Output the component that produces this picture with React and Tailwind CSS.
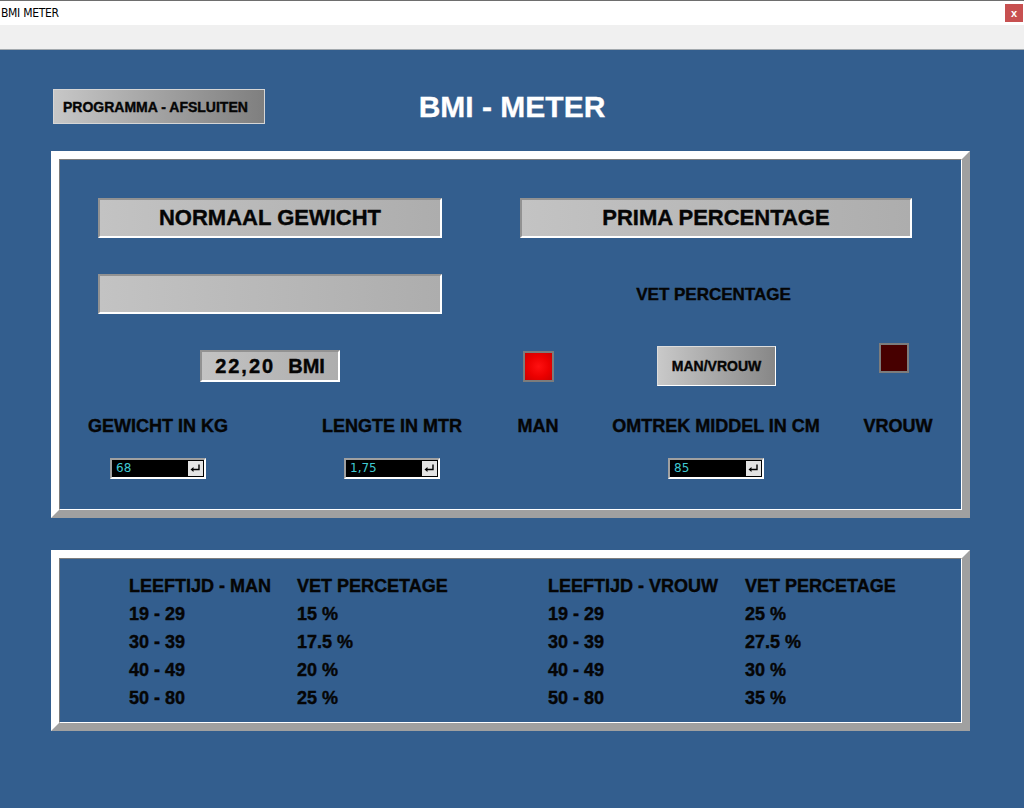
import React from "react";

const ink = "text-[#050505] [-webkit-text-stroke:0.4px_#050505]";

function EnterGlyph() {
  return (
    <svg width="13" height="13" viewBox="0 0 13 13" aria-hidden="true">
      <path d="M10 2.5 V7.5 H3.5" fill="none" stroke="#000" strokeWidth="1.4" />
      <path d="M1.5 7.5 L4.5 5 V10 Z" fill="#000" />
    </svg>
  );
}

function NumField({ value }) {
  return (
    <div className="w-[96px] h-[21px] flex border-2 border-t-[#a0a0a0] border-l-[#a0a0a0] border-r-white border-b-white [-webkit-text-stroke:0px]">
      <div className="flex-1 bg-black text-[#3fc9d2] text-[12px] font-normal leading-[17px] pl-[4px] font-['DejaVu_Sans',sans-serif]">
        {value}
      </div>
      <div className="w-[17px] h-[17px] bg-[#e4e4e4] border border-black flex items-center justify-center">
        <EnterGlyph />
      </div>
    </div>
  );
}

function InsetBox({ className = "", children }) {
  return (
    <div
      className={`bg-linear-to-r from-[#c3c3c3] to-[#adadad] border-2 border-t-[#929292] border-l-[#929292] border-r-white border-b-white flex items-center justify-center ${className}`}
    >
      {children}
    </div>
  );
}

const manRows = [
  ["19 - 29", "15 %"],
  ["30 - 39", "17.5 %"],
  ["40 - 49", "20 %"],
  ["50 - 80", "25 %"],
];
const vrouwRows = [
  ["19 - 29", "25 %"],
  ["30 - 39", "27.5 %"],
  ["40 - 49", "30 %"],
  ["50 - 80", "35 %"],
];

export default function App() {
  return (
    <div className="w-[1024px] h-[808px] flex flex-col overflow-hidden font-['Liberation_Sans',Arial,sans-serif]">
      {/* window chrome */}
      <div className="h-px bg-[#6e6e6e]" />
      <div className="h-[24px] bg-white flex items-center justify-between pl-[1px] pr-[1px]">
        <span className="text-[12px] leading-none text-black font-['DejaVu_Sans_Condensed','Liberation_Sans_Narrow',sans-serif] tracking-[-0.3px]">
          BMI METER
        </span>
        <div className="w-[18px] h-[18px] bg-[#c75050] flex items-center justify-center text-white text-[11px] font-bold leading-none">
          x
        </div>
      </div>
      <div className="h-[24px] bg-[#f0f0f0]" />
      <div className="h-px bg-[#a3a9ae]" />

      <main className="flex-1 bg-[#335e8e] flex flex-col pt-[39px]">
        {/* header */}
        <div className="grid grid-cols-[1fr_auto_1fr] items-center h-[35px]">
          <div className="pl-[53px]">
            <button className={`w-[212px] h-[35px] pl-[9px] text-left bg-linear-to-r from-[#c7c7c7] to-[#7f7f7f] border border-[#d6d6d6] text-[14px] font-bold leading-none ${ink}`}>
              PROGRAMMA - AFSLUITEN
            </button>
          </div>
          <h1 className="text-white text-[30px] font-bold leading-none [-webkit-text-stroke:0.3px_#fff]">BMI - METER</h1>
          <div />
        </div>

        {/* measurement panel */}
        <section className="ml-[51px] mt-[27px] w-[919px] h-[367px] border-8 border-t-white border-l-white border-r-[#a0a0a0] border-b-[#a0a0a0]">
          <div className={`h-full border border-t-[#7d7d7d] border-l-[#7d7d7d] border-r-white border-b-white flex flex-col pt-[38px] ${ink}`}>
            <div className="flex">
              <InsetBox className="ml-[38px] w-[344px] h-[40px]">
                <span className="text-[22px] font-bold leading-none">NORMAAL GEWICHT</span>
              </InsetBox>
              <InsetBox className="ml-[78px] w-[392px] h-[40px]">
                <span className="text-[22px] font-bold leading-none">PRIMA PERCENTAGE</span>
              </InsetBox>
            </div>

            <div className="flex items-center mt-[36px]">
              <InsetBox className="ml-[38px] w-[344px] h-[40px]" />
              <div className="ml-[78px] w-[392px] pr-[5px] text-center text-[17px] font-bold leading-none">
                VET PERCENTAGE
              </div>
            </div>

            <div className="flex items-start mt-[29px]">
              <InsetBox className="ml-[140px] mt-[7px] w-[140px] h-[32px]">
                <span className="text-[20px] font-bold leading-none tracking-[2px]">22,20</span>
                <span className="ml-[13px] text-[20px] font-bold leading-none">BMI</span>
              </InsetBox>
              <div className="ml-[183px] mt-[8px] w-[31px] h-[31px] border-2 border-[#7c7c7c] bg-[radial-gradient(circle,#ff1010_0%,#ec0000_55%,#cc0000_100%)]" />
              <button className="ml-[103px] mt-[3px] w-[119px] h-[40px] bg-linear-to-r from-[#c9c9c9] to-[#878787] border border-t-[#dcdcdc] border-l-[#dcdcdc] border-r-white border-b-white text-[14px] font-bold leading-none">
                MAN/VROUW
              </button>
              <div className="ml-[103px] w-[30px] h-[30px] border-2 border-[#7c7c7c] bg-[#470000]" />
            </div>

            <div className="flex items-start mt-[30px] text-[18px] font-bold leading-[20px] whitespace-nowrap">
              <div className="ml-[28px] w-[140px] flex flex-col items-center">
                <span>GEWICHT IN KG</span>
                <div className="mt-[22px]">
                  <NumField value="68" />
                </div>
              </div>
              <div className="ml-[94px] w-[140px] flex flex-col items-center">
                <span>LENGTE IN MTR</span>
                <div className="mt-[22px]">
                  <NumField value="1,75" />
                </div>
              </div>
              <div className="ml-[56px] w-[40px] flex flex-col items-center">
                <span>MAN</span>
              </div>
              <div className="ml-[56px] w-[204px] flex flex-col items-center">
                <span>OMTREK MIDDEL IN CM</span>
                <div className="mt-[22px]">
                  <NumField value="85" />
                </div>
              </div>
              <div className="ml-[48px] w-[64px] flex flex-col items-center">
                <span>VROUW</span>
              </div>
            </div>
          </div>
        </section>

        {/* reference table */}
        <section className="ml-[51px] mt-[32px] w-[919px] h-[181px] border-8 border-t-white border-l-white border-r-[#a0a0a0] border-b-[#a0a0a0]">
          <div className="h-full border border-t-[#7d7d7d] border-l-[#7d7d7d] border-r-white border-b-white pt-[13px] pl-[69px]">
            <div className={`grid grid-cols-[168px_251px_197px_auto] text-[18px] font-bold leading-[28px] whitespace-nowrap ${ink}`}>
              <div>LEEFTIJD - MAN</div>
              <div>VET PERCETAGE</div>
              <div>LEEFTIJD - VROUW</div>
              <div>VET PERCETAGE</div>
              {manRows.map((m, i) => (
                <React.Fragment key={m[0]}>
                  <div>{m[0]}</div>
                  <div>{m[1]}</div>
                  <div>{vrouwRows[i][0]}</div>
                  <div>{vrouwRows[i][1]}</div>
                </React.Fragment>
              ))}
            </div>
          </div>
        </section>
      </main>
    </div>
  );
}
